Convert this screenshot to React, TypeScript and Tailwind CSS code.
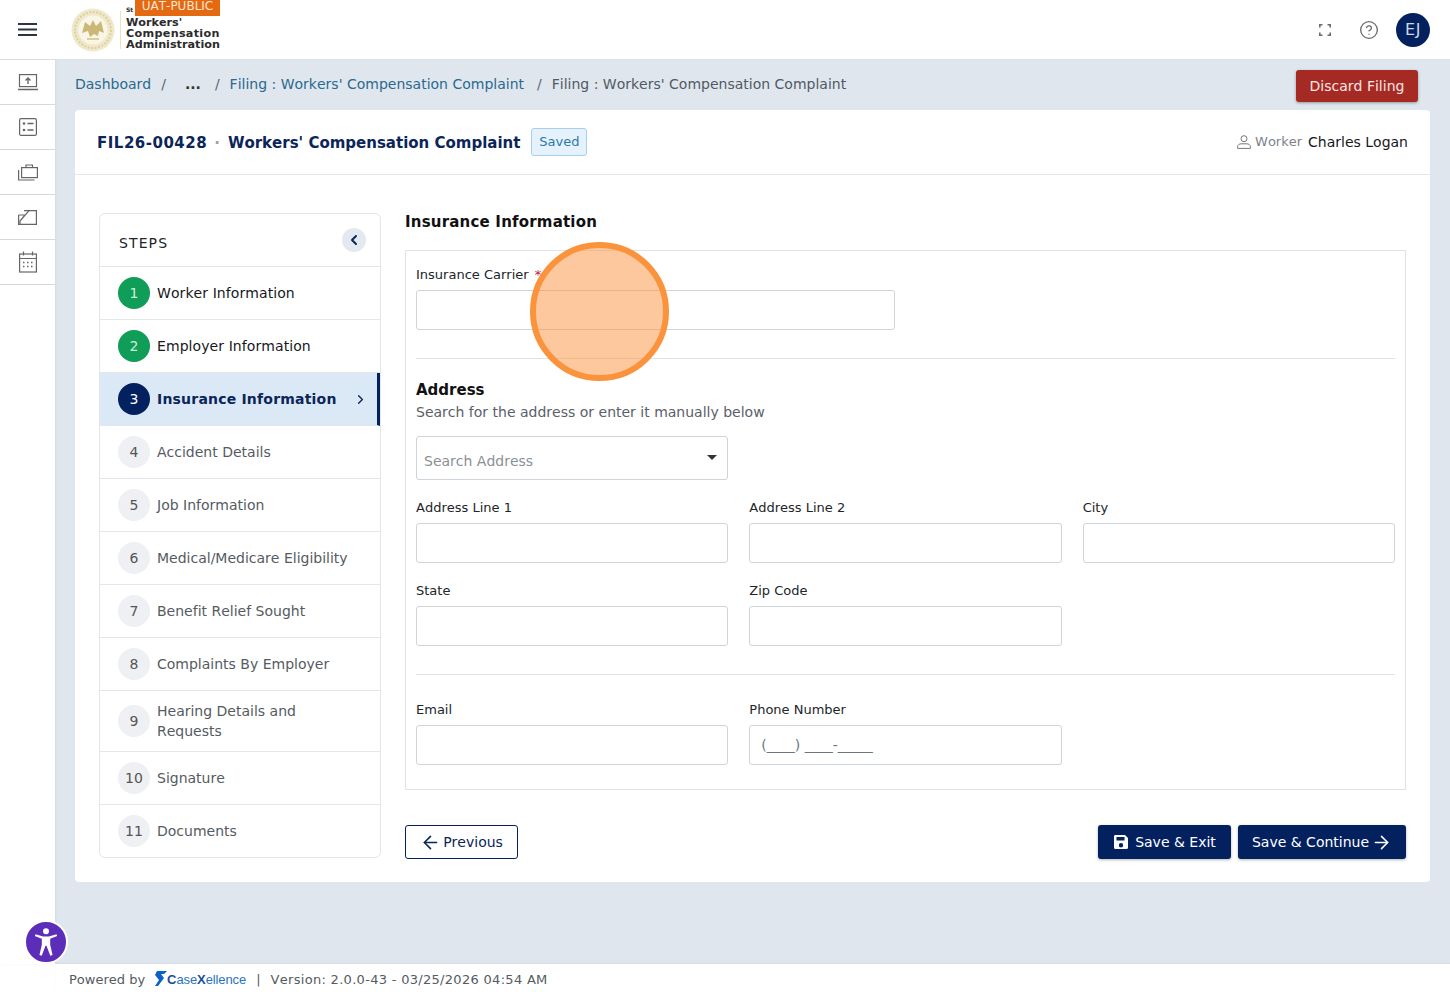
import React from "react";
import { ChevronLeft, ChevronRight, ArrowLeft, ArrowRight, CircleHelp } from "lucide-react";

const steps: { n: number; label: string; state: "done" | "active" | "todo"; tall?: boolean }[] = [
  { n: 1, label: "Worker Information", state: "done" },
  { n: 2, label: "Employer Information", state: "done" },
  { n: 3, label: "Insurance Information", state: "active" },
  { n: 4, label: "Accident Details", state: "todo" },
  { n: 5, label: "Job Information", state: "todo" },
  { n: 6, label: "Medical/Medicare Eligibility", state: "todo" },
  { n: 7, label: "Benefit Relief Sought", state: "todo" },
  { n: 8, label: "Complaints By Employer", state: "todo" },
  { n: 9, label: "Hearing Details and Requests", state: "todo", tall: true },
  { n: 10, label: "Signature", state: "todo" },
  { n: 11, label: "Documents", state: "todo" },
];

function Field({ label, placeholder, req }: { label: string; placeholder?: string; req?: boolean }) {
  return (
    <div className="flex flex-col">
      <label className="text-[13px] leading-[16px] text-[#212529] mb-[7px]">
        {label}
        {req && <span className="text-[#c0143c] ml-[2px]"> *</span>}
      </label>
      <div className="h-[40px] border border-[#ced4da] rounded-[3px] bg-white px-[11px] flex items-center text-[14px] text-[#6c757d]">
        {placeholder}
      </div>
    </div>
  );
}

function SideIcon({ children }: { children: React.ReactNode }) {
  return (
    <div className="h-[45px] border-b border-[#d5d8dc] flex items-center justify-center text-[#666]">
      {children}
    </div>
  );
}

export default function App() {
  return (
    <div className="relative w-[1450px] h-[992px] overflow-hidden bg-white flex flex-col font-['DejaVu_Sans',sans-serif] text-[14px] [font-kerning:none] [font-variant-ligatures:none]">
      {/* Top bar */}
      <header className="h-[60px] shrink-0 flex items-center bg-white border-b border-[#dee2e6] pl-[18px] pr-[20px]">
        <svg width="19" height="13" viewBox="0 0 19 13" fill="#2a3442">
          <rect x="0" y="0" width="19" height="2" />
          <rect x="0" y="5.5" width="19" height="2" />
          <rect x="0" y="11" width="19" height="2" />
        </svg>
        <div className="relative ml-[34px] flex items-center h-[60px]">
          <svg width="44" height="44" viewBox="0 0 44 44" className="mt-[1px]">
            <circle cx="22" cy="22" r="21.5" fill="#efe8cb" />
            <circle cx="22" cy="22" r="14.5" fill="#f9f6e8" />
            <circle cx="22" cy="22" r="18" fill="none" stroke="#ddd0a0" strokeWidth="2" strokeDasharray="2 1.5" />
            <path d="M11 25 L14 14 L19 18 L22 12 L25 18 L30 13 L33 25 L28 23 L27 28 L23 26 L19 29 L17 23 Z" fill="#cbb876" />
            <rect x="16" y="30" width="12" height="2" fill="#ddcf9c" />
          </svg>
          <div className="w-px h-[38px] bg-[#e9e2c6] ml-[5px]" />
          <div className="relative ml-[5px] flex flex-col pt-[8px] text-[11.2px] leading-[11px] font-bold text-[#2b2b2b]">
            <span className="absolute left-0 top-[-3px] text-[6px] leading-[8px] font-bold">St</span>
            <span>Workers'</span>
            <span className="tracking-[0.3px]">Compensation</span>
            <span>Administration</span>
          </div>
          <div className="absolute left-[64px] top-0 h-[16px] w-[85px] bg-[#e36a10] text-[#fbe6d6] text-[12px] leading-[12px] text-center">
            UAT-PUBLIC
          </div>
        </div>
        <div className="ml-auto flex items-center">
          <svg width="12" height="12" viewBox="0 0 12 12" fill="none" stroke="#6b6b6b" strokeWidth="1.6" className="mr-[28px]">
            <path d="M0.8 3.5V0.8H3.5M8.5 0.8H11.2V3.5M11.2 8.5V11.2H8.5M3.5 11.2H0.8V8.5" />
          </svg>
          <CircleHelp size={20} strokeWidth={1.6} className="text-[#6b6b6b] mr-[17px]" />
          <div className="w-[34px] h-[34px] rounded-full bg-[#03215f] text-[#cfd9ea] flex items-center justify-center text-[16px] pt-[1px] tracking-[0.5px]">
            EJ
          </div>
        </div>
      </header>

      <div className="flex flex-1 min-h-0">
        {/* Sidebar */}
        <aside className="w-[55px] shrink-0 bg-white flex flex-col shadow-[1px_0_2px_rgba(0,0,0,0.06)] z-10">
          <SideIcon>
            <svg width="20" height="17" viewBox="0 0 20 17" fill="none" stroke="currentColor" strokeWidth="1.2">
              <rect x="1.5" y="0.6" width="17" height="12" />
              <path d="M0 15.5H20" strokeWidth="1.5" />
              <path d="M10 10V4M7.5 6.5L10 4L12.5 6.5" strokeWidth="1.4" />
            </svg>
          </SideIcon>
          <SideIcon>
            <svg width="18" height="18" viewBox="0 0 18 18" fill="none" stroke="currentColor" strokeWidth="1.2">
              <rect x="0.6" y="0.6" width="16.8" height="16.8" rx="1.5" />
              <path d="M8.5 5.5H14.5M8.5 12H14.5" strokeWidth="1.3" />
              <circle cx="5" cy="5.5" r="1.3" fill="currentColor" stroke="none" />
              <circle cx="5" cy="12" r="1.3" fill="currentColor" stroke="none" />
            </svg>
          </SideIcon>
          <SideIcon>
            <svg width="20" height="17" viewBox="0 0 20 17" fill="none" stroke="currentColor" strokeWidth="1.2">
              <rect x="3.6" y="3.6" width="15.8" height="10" />
              <path d="M8 3.6V1H14.5V3.6" />
              <path d="M0.6 6V16H16.5" />
            </svg>
          </SideIcon>
          <SideIcon>
            <svg width="19" height="15" viewBox="0 0 19 15" fill="none" stroke="currentColor" strokeWidth="1.2">
              <path d="M6 0.6H18.4V14.4H0.6V5" />
              <path d="M0.6 5H7M11 0.6L2 11M7 5L2 11V14.4" />
            </svg>
          </SideIcon>
          <SideIcon>
            <svg width="18" height="22" viewBox="0 0 18 22" fill="none" stroke="currentColor" strokeWidth="1.2">
              <rect x="0.6" y="3" width="16.8" height="18" />
              <path d="M0.6 7.5H17.4M4.5 0.5V4.5M13.5 0.5V4.5" />
              <path d="M4 11.5H5.5M8 11.5H9.5M12 11.5H13.5M4 15.5H5.5M8 15.5H9.5M12 15.5H13.5" strokeWidth="1.3" />
            </svg>
          </SideIcon>
        </aside>

        {/* Main */}
        <main className="flex-1 min-w-0 bg-[#e0e6ee] pl-[20px] pr-[20px]">
          <div className="h-[50px] flex items-start">
            <nav className="flex items-center text-[14px] leading-[20px] text-[#5a6570] mt-[14px]">
              <span className="text-[#2a6a8f]">Dashboard</span>
              <span className="ml-[10px]">/</span>
              <span className="ml-[19px] font-bold text-[#333]">...</span>
              <span className="ml-[14px]">/</span>
              <span className="ml-[10px] text-[#2a6a8f]">Filing : Workers' Compensation Complaint</span>
              <span className="ml-[13px]">/</span>
              <span className="ml-[10px] text-[#505a64]">Filing : Workers' Compensation Complaint</span>
            </nav>
            <button className="ml-auto mr-[12px] mt-[10px] h-[32px] w-[122px] rounded-[3px] bg-[#a52a24] text-[#f7e6e4] text-[14px] shadow-[0_1px_3px_rgba(0,0,0,0.35)]">
              Discard Filing
            </button>
          </div>

          {/* Card */}
          <section className="h-[772px] bg-white rounded-[4px] flex flex-col">
            <div className="h-[65px] shrink-0 border-b border-[#e3e6ea] flex items-center pl-[22px] pr-[22px]">
              <h1 className="text-[15px] font-bold text-[#0b2559] whitespace-nowrap pt-[2px]">
                <span className="tracking-[0.5px]">FIL26-00428</span>
                <span className="text-[#9aa3ad] font-bold ml-[7px] mr-[8px]">·</span>
                Workers' Compensation Complaint
              </h1>
              <span className="ml-[11px] h-[28px] w-[56px] flex items-center justify-center bg-[#e6f2fb] border border-[#a9d0ea] rounded-[3px] text-[13px] text-[#2b78ad]">
                Saved
              </span>
              <div className="ml-auto flex items-center">
                <svg width="14" height="14" viewBox="0 0 14 14" fill="none" stroke="#777" strokeWidth="1" className="mr-[4px]">
                  <circle cx="7" cy="3.7" r="3" />
                  <path d="M0.6 13.4V11.6C0.6 9.8 2.5 8.8 4.2 8.8H9.8C11.5 8.8 13.4 9.8 13.4 11.6V13.4Z" />
                </svg>
                <span className="text-[13px] text-[#7d8288] mr-[6px]">Worker</span>
                <span className="text-[14px] text-[#15181c]">Charles Logan</span>
              </div>
            </div>

            <div className="flex pl-[24px] pr-[24px] pt-[38px]">
              {/* Steps */}
              <div className="w-[282px] h-[645px] shrink-0 border border-[#e3e6ea] rounded-[6px] overflow-hidden flex flex-col">
                <div className="h-[53px] shrink-0 flex items-center justify-between pl-[19px] pr-[14px] border-b border-[#e3e6ea]">
                  <span className="text-[14px] tracking-[1.1px] text-[#212529] pt-[6px]">STEPS</span>
                  <span className="w-[24px] h-[24px] rounded-full bg-[#e4e8f0] flex items-center justify-center text-[#0b2559] mb-[1px]">
                    <ChevronLeft size={16} strokeWidth={3} />
                  </span>
                </div>
                {steps.map((s) => (
                  <div
                    key={s.n}
                    className={
                      (s.tall ? "h-[61px] " : s.n === 11 ? "h-[52px] " : "h-[53px] ") +
                      "shrink-0 flex items-center pl-[18px] pr-[9px] border-b last:border-b-0 border-[#e3e6ea] " +
                      (s.state === "active" ? "bg-[#dbe9f6] border-r-[3px] border-r-[#03215f]" : "")
                    }
                  >
                    <span
                      className={
                        "w-[32px] h-[32px] rounded-full shrink-0 flex items-center justify-center text-[14px] " +
                        (s.state === "done"
                          ? "bg-[#0f9d58] text-[#c9f0d9]"
                          : s.state === "active"
                            ? "bg-[#03215f] text-white"
                            : "bg-[#eef0f3] text-[#555]")
                      }
                    >
                      {s.n}
                    </span>
                    <span
                      className={
                        "ml-[7px] text-[14px] leading-[20px] " +
                        (s.state === "done"
                          ? "text-[#15181c] tracking-[0.08px]"
                          : s.state === "active"
                            ? "font-bold text-[#0b2559] tracking-[0.2px]"
                            : "text-[#555b61]") +
                        (s.tall ? " w-[170px]" : "")
                      }
                    >
                      {s.label}
                    </span>
                    {s.state === "active" && (
                      <ChevronRight size={15} strokeWidth={2.2} className="ml-auto text-[#0b2559]" />
                    )}
                  </div>
                ))}
              </div>

              {/* Form */}
              <div className="flex-1 min-w-0 ml-[24px] flex flex-col">
                <h2 className="text-[15px] leading-[18px] font-bold text-[#111] mb-[19px] tracking-[0.2px]">Insurance Information</h2>
                <div className="border border-[#dfe2e6] h-[540px] px-[10px] pt-[16px]">
                  <div className="w-[479px]">
                    <Field label="Insurance Carrier" req />
                  </div>
                  <div className="border-t border-[#dfe2e6] mt-[28px]" />
                  <h3 className="text-[15px] leading-[18px] font-bold text-[#111] mt-[22px]">Address</h3>
                  <p className="text-[14px] leading-[18px] text-[#5a6068] mt-[4px]">Search for the address or enter it manually below</p>
                  <div className="mt-[15px] w-[312px] h-[44px] border border-[#ced4da] rounded-[3px] flex items-center justify-between pl-[7px] pr-[10px] pt-[7px] text-[14px] text-[#8b9096]">
                    <span>Search Address</span>
                    <span className="w-0 h-0 border-x-[5px] border-x-transparent border-t-[5px] border-t-[#333] mb-[8px]" />
                  </div>
                  <div className="grid grid-cols-3 gap-x-[21px] gap-y-[20px] mt-[20px]">
                    <Field label="Address Line 1" />
                    <Field label="Address Line 2" />
                    <Field label="City" />
                    <Field label="State" />
                    <Field label="Zip Code" />
                  </div>
                  <div className="border-t border-[#dfe2e6] mt-[28px]" />
                  <div className="grid grid-cols-3 gap-x-[21px] mt-[27px]">
                    <Field label="Email" />
                    <Field label="Phone Number" placeholder="(____) ____-_____" />
                  </div>
                </div>

                <div className="flex items-center mt-[35px]">
                  <button className="h-[34px] w-[113px] border border-[#03215f] rounded-[3px] bg-white text-[#0b2559] flex items-center justify-center gap-[2px] text-[14px]">
                    <ArrowLeft size={21} strokeWidth={1.8} />
                    Previous
                  </button>
                  <button className="ml-auto h-[34px] w-[133px] rounded-[3px] bg-[#03215f] text-white flex items-center justify-center gap-[6px] text-[14px] shadow-[0_1px_3px_rgba(0,0,0,0.3)]">
                    <svg width="16" height="16" viewBox="0 0 16 16" fill="white">
                      <path fillRule="evenodd" d="M2 1h10l3 3v9.5a1.5 1.5 0 0 1-1.5 1.5h-11A1.5 1.5 0 0 1 1 13.5v-11A1.5 1.5 0 0 1 2 1Zm1.5 2v3.5h8V3h-8ZM8 9a2.2 2.2 0 1 0 0 4.4A2.2 2.2 0 0 0 8 9Z" />
                    </svg>
                    Save &amp; Exit
                  </button>
                  <button className="ml-[7px] h-[34px] w-[168px] rounded-[3px] bg-[#03215f] text-white flex items-center justify-center gap-[2px] text-[14px] shadow-[0_1px_3px_rgba(0,0,0,0.3)]">
                    Save &amp; Continue
                    <ArrowRight size={21} strokeWidth={1.8} />
                  </button>
                </div>
              </div>
            </div>
          </section>
        </main>
      </div>

      {/* Footer */}
      <footer className="h-[28px] shrink-0 ml-[55px] bg-white flex items-center pl-[14px] pt-[3px] text-[13px] text-[#555b61] shadow-[0_-1px_2px_rgba(0,0,0,0.05)] z-10">
        <span>Powered by</span>
        <svg width="12" height="15" viewBox="0 0 12 15" className="ml-[10px] -mt-[2px]">
          <path d="M2 0H12L9 3H6L9 7L3 15H0L4 9L0 4Z" fill="#0a63c4" />
        </svg>
        <span className="font-['Liberation_Sans',sans-serif] text-[#2a74bd] text-[13px] tracking-[-0.1px]">
          <span className="font-bold text-[#1b4f95]">C</span>
          <span>ase</span>
          <span className="font-bold text-[#1b4f95]">X</span>
          <span>ellence</span>
        </span>
        <span className="ml-[10px]">|</span>
        <span className="ml-[10px] tracking-[0.3px]">Version: 2.0.0-43 - 03/25/2026 04:54 AM</span>
      </footer>

      {/* Accessibility */}
      <div className="absolute z-20 left-[24px] top-[920px] w-[44px] h-[44px] rounded-full bg-[#5b2db8] border-2 border-white flex items-center justify-center">
        <svg width="28" height="32" viewBox="0 0 30 34" fill="white">
          <circle cx="15" cy="5.5" r="3.2" />
          <path d="M3 10.5 L3.8 8.8 L12 11 H18 L26.2 8.8 L27 10.5 L19.5 13.5 V20 L22 31 L19.6 31.6 L15.5 21 H14.5 L10.4 31.6 L8 31 L10.5 20 V13.5 Z" />
        </svg>
      </div>

      {/* Click highlight */}
      <div className="absolute z-20 left-[530px] top-[242px] w-[139px] h-[139px] rounded-full border-[6px] border-[#fb923c] bg-[#fb923c]/50 pointer-events-none" />
    </div>
  );
}
